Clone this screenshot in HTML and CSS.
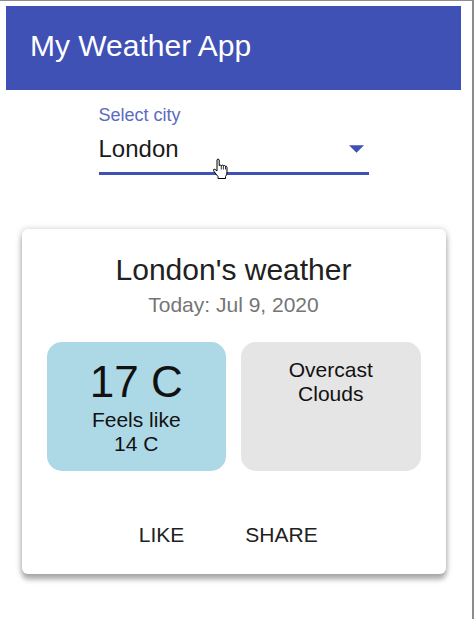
FILE: index.html
```html
<!DOCTYPE html>
<html lang="en">
<head>
  <meta charset="UTF-8">
  <title>My Weather App</title>
  <link rel="stylesheet" href="styles.css">
</head>
<body>

  <div class="window">

    <header class="app-bar">
      <h1>My Weather App</h1>
    </header>

    <main class="content">

      <div class="city-select">
        <label>Select city</label>
        <div class="select-value">
          London
          <svg class="select-arrow" width="15" height="8" viewBox="0 0 10 5"><path d="M0 0 L5 5 L10 0z" fill="#3f51b5"/></svg>
        </div>
        <svg class="cursor" width="17" height="21" viewBox="0 0 17 21">
          <path d="M5 1.8 Q6 0 7.2 1.8 V7.6 Q8.2 6.6 9.3 7.6 Q10.3 6.6 11.4 7.6 Q12.5 7 13.5 8.2 Q14.8 7.8 15 9.4 V14 Q15 17 13.5 18.6 V20.5 H6 V18.6 Q4.2 16.4 1.6 12.8 Q1 11 2.8 11.2 L5 13 Z" fill="#fff" stroke="#000" stroke-width="1" stroke-linejoin="round"/>
          <path d="M9.3 7.6 V11.5 M11.4 7.6 V11.5 M13.5 8.2 V11.5" stroke="#000" stroke-width="0.8" fill="none"/>
        </svg>
      </div>

      <div class="card">
        <h2>London's weather</h2>
        <p class="date">Today: Jul 9, 2020</p>
        <div class="tiles">
          <div class="tile temp">
            <div class="temp-main">17 C</div>
            <div class="temp-feels">Feels like<br>14 C</div>
          </div>
          <div class="tile desc">Overcast<br>Clouds</div>
        </div>
        <div class="actions">
          <button class="action-btn">LIKE</button>
          <button class="action-btn">SHARE</button>
        </div>
      </div>

    </main>

  </div>

</body>
</html>
```

FILE: styles.css
```css
body {
  margin: 0; padding: 0;
  background: #fff;
  font-family: "Liberation Sans", Arial, sans-serif;
}
.window {
  width: 474px; height: 619px;
  border-top: 1px solid #8c8c8c;
  border-right: 2px solid #8c8c8c;
  padding-top: 5px;
  box-sizing: border-box;
  overflow: hidden;
}
.app-bar {
  margin-left: 6px;
  width: 455px; height: 84px;
  padding: 23px 24px 0;
  box-sizing: border-box;
  background: #3f51b5;
  color: #fff;
}
.app-bar h1 {
  margin: 0;
  font-size: 30px; font-weight: normal;
  line-height: 34px;
}
.content {
  margin-left: 6px;
  width: 455px;
}
.city-select {
  position: relative;
  width: 270px;
  margin: 15px auto 0;
}
.city-select label {
  display: block;
  font-size: 18px; line-height: 21px;
  color: #5c6bc0;
}
.select-value {
  position: relative;
  margin-top: 9px;
  padding-bottom: 9px;
  font-size: 24px; line-height: 28px;
  color: #1a1a1a;
  border-bottom: 3px solid #3f51b5;
}
.select-arrow { position: absolute; left: 250px; top: 10px; }
.cursor { position: absolute; left: 113px; top: 53px; }
.card {
  width: 424px;
  margin: 54px auto 0;
  padding: 24px 25px 18px;
  box-sizing: border-box;
  background: #fff;
  border-radius: 6px;
  text-align: center;
  box-shadow: 0 6px 5px 0 rgba(0,0,0,0.24), 0 1px 6px 1px rgba(0,0,0,0.2);
}
.card h2 {
  margin: 0;
  font-size: 30px; font-weight: normal;
  line-height: 34px;
  color: #212121;
}
.date {
  margin: 6px 0 0;
  font-size: 21px; line-height: 24px;
  color: #757575;
}
.tiles {
  display: grid;
  grid-template-columns: 1fr 1fr;
  gap: 15px;
  margin-top: 25px;
}
.tile {
  border-radius: 15px;
  font-size: 21px; line-height: 24px;
  color: #111;
}
.tile.temp { background: #add8e6; padding: 14px 10px 15px; }
.tile.desc { background: #e5e5e5; padding: 16px 10px; }
.temp-main { font-size: 44px; line-height: 52px; }
.actions {
  display: flex;
  justify-content: center;
  gap: 24px;
  margin-top: 43px;
  padding-right: 24px;
}
.action-btn {
  width: 96px;
  padding: 9px 0;
  border: 0; background: none;
  font-family: "Liberation Sans", Arial, sans-serif;
  font-size: 21px; line-height: 24px;
  color: #212121;
  cursor: pointer;
}
```
